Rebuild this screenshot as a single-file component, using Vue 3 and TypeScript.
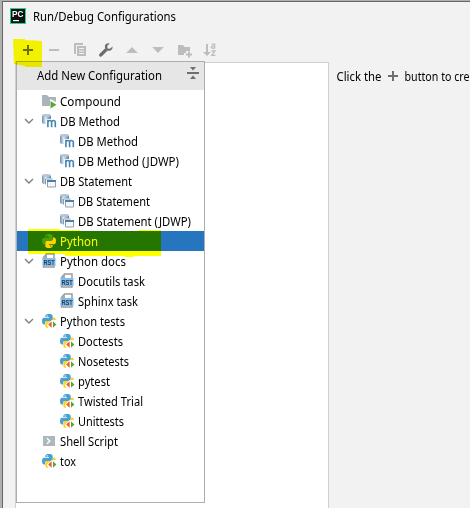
<script setup lang="ts">
interface TreeRow {
  label: string
  icon: string
  level?: number
  open?: boolean
  selected?: boolean
  width: number
}

const tools: string[] = ['plus', 'minus', 'copy', 'wrench', 'up', 'down', 'folder', 'sort']

const rows: TreeRow[] = [
  { label: 'Compound', icon: 'compound', width: 61 },
  { label: 'DB Method', icon: 'method', open: true, width: 60 },
  { label: 'DB Method', icon: 'method', level: 1, width: 60 },
  { label: 'DB Method (JDWP)', icon: 'method', level: 1, width: 101 },
  { label: 'DB Statement', icon: 'statement', open: true, width: 72 },
  { label: 'DB Statement', icon: 'statement', level: 1, width: 72 },
  { label: 'DB Statement (JDWP)', icon: 'statement', level: 1, width: 113 },
  { label: 'Python', icon: 'python', selected: true, width: 38 },
  { label: 'Python docs', icon: 'rst', open: true, width: 66 },
  { label: 'Docutils task', icon: 'rst', level: 1, width: 67 },
  { label: 'Sphinx task', icon: 'rst', level: 1, width: 60 },
  { label: 'Python tests', icon: 'pytest', open: true, width: 65 },
  { label: 'Doctests', icon: 'pytest', level: 1, width: 45 },
  { label: 'Nosetests', icon: 'pytest', level: 1, width: 51 },
  { label: 'pytest', icon: 'pytest', level: 1, width: 32 },
  { label: 'Twisted Trial', icon: 'pytest', level: 1, width: 65 },
  { label: 'Unittests', icon: 'pytest', level: 1, width: 46 },
  { label: 'Shell Script', icon: 'shell', width: 58 },
  { label: 'tox', icon: 'pytest', width: 16 },
]
</script>

<template>
  <svg class="defs" width="0" height="0">
    <symbol id="plus" viewBox="0 0 16 16"><path d="M7 3h2v4h4v2H9v4H7V9H3V7h4z" fill="#6e6e6e" /></symbol>
    <symbol id="minus" viewBox="0 0 16 16"><path d="M3 7h10v2H3z" fill="#bdbdbd" /></symbol>
    <symbol id="copy" viewBox="0 0 16 16">
      <path d="M2 1h9v2H4v9H2z" fill="#bdbdbd" />
      <path d="M5 4h9v10H5z" fill="#bdbdbd" />
      <path d="M7 6.5h5M7 9h5M7 11.5h5" stroke="#f2f2f2" />
    </symbol>
    <symbol id="wrench" viewBox="0 0 16 16">
      <path d="M14.5 4.4 12 6.8 9.6 6.5 9.2 4 11.6 1.5C9.2.9 7 2.3 6.9 4.5c0 .7.1 1.2.4 1.7L1.6 11.7c-.8.8-.7 1.8 0 2.5.7.7 1.8.7 2.5-.1l5.5-5.6c2.9.9 5.4-1.2 4.9-4.1z" fill="#6e6e6e" />
    </symbol>
    <symbol id="up" viewBox="0 0 16 16"><path d="M2.2 11 8 5l5.8 6z" fill="#bdbdbd" /></symbol>
    <symbol id="down" viewBox="0 0 16 16"><path d="M2.2 5 8 11l5.8-6z" fill="#bdbdbd" /></symbol>
    <symbol id="folder" viewBox="0 0 16 16">
      <path d="M2 3h5l1.5 2H14v4h-4v2H8v2H2z" fill="#bdbdbd" />
      <path d="M12 9.5h2v2h2v2h-2v2h-2v-2h-2v-2h2z" fill="#bdbdbd" />
    </symbol>
    <symbol id="sort" viewBox="0 0 16 16">
      <path d="M4 2h2v8h3l-4 4-4-4h3z" fill="#bdbdbd" />
      <path d="M9.6 2.2h3v4h-2.3c-1.2 0-1.2-2 0-2h2.3M9.5 9h3.4L9.9 13.3h3.5" fill="none" stroke="#bdbdbd" stroke-width="1.3" />
    </symbol>
    <symbol id="compound" viewBox="0 0 16 16">
      <path d="M1 2h5l2 2h7v5L9 6v7H1z" fill="#aab5bb" />
      <path d="M9.5 8 15.5 11.7l-6 3.7z" fill="#59a832" />
    </symbol>
    <linearGradient id="steel" x1="0" x2="1">
      <stop offset="0" stop-color="#7090b0" /><stop offset=".4" stop-color="#dce7f1" /><stop offset="1" stop-color="#527ba3" />
    </linearGradient>
    <symbol id="cylinder" viewBox="0 0 16 16">
      <path d="M1 2.5v7.3C1.5 11 3.5 11.3 5 11V7h5V2.5z" fill="url(#steel)" />
      <ellipse cx="5.5" cy="2.4" rx="4.5" ry="1.4" fill="#b5c5d6" />
    </symbol>
    <symbol id="method" viewBox="0 0 16 16">
      <use href="#cylinder" />
      <path d="M5.2 6h9.8v9H5.2z" fill="#fff" />
      <path d="M6.9 14.3V6.8M7 9c.3-2.1 3.6-2.1 3.6.1v5.2M10.7 9c.3-2.1 3.6-2.1 3.6.1v5.2" fill="none" stroke="#4284ae" stroke-width="1.6" />
    </symbol>
    <symbol id="statement" viewBox="0 0 16 16">
      <use href="#cylinder" />
      <path d="M4 5h8v2.5H6V12H4z" fill="#fff" />
      <path d="M4.5 6h7M4.5 6v5.5" stroke="#7f9bb5" fill="none" />
      <path d="M6.5 7.5h8v6.5h-8z" fill="#f4f6f8" stroke="#91a0ae" />
      <path d="M6 7h9v2H6z" fill="#4f7fa8" />
    </symbol>
    <symbol id="snake-top" viewBox="0 0 14 14">
      <path d="M3.3 3V2.1C3.3.6 4.8 0 7 0s3.7.6 3.7 2.1v3c0 1.3-.8 1.9-2 1.9H5.2C3.9 7 3 7.9 3 9.2v1.2H2C.6 10.4 0 9 0 7s.6-3.3 2-3.3h5V3zM5.2 1.2a.7.7 0 1 0 0 1.4.7.7 0 0 0 0-1.4" fill-rule="evenodd" />
    </symbol>
    <symbol id="python" viewBox="0 0 16 16">
      <use href="#snake-top" x="1" y="1" width="14" height="14" fill="#4b9fd3" />
      <g transform="rotate(180 8 8)"><use href="#snake-top" x="1" y="1" width="14" height="14" fill="#ffd21e" /></g>
    </symbol>
    <symbol id="pytest" viewBox="0 0 16 16">
      <use href="#python" />
      <path d="M10.5 7.2 16 7v9H7.5l-1.6-4.5z" fill="#fff" />
      <path d="M10.6 8.2v6.6L7.2 11.5z" fill="#f05a28" />
      <path d="M12 8.2v6.6l3.4-3.3z" fill="#59a832" />
    </symbol>
    <symbol id="rst" viewBox="0 0 16 16">
      <path d="M2.5 6V4.5l3-3.5H13v5M2.5 12v2H13v-2" fill="#fff" stroke="#9c9c9c" stroke-width="1.5" />
      <path d="M2 5 6 .7V5z" fill="#a4a8aa" />
      <path d="M1.5 5h13v8h-13z" fill="#82bced" />
      <text x="2.4" y="11.5" textLength="11.4" lengthAdjust="spacingAndGlyphs" class="rst-text">RST</text>
    </symbol>
    <symbol id="shell" viewBox="0 0 16 16">
      <path d="M2 3h12v10H2z" fill="#acb8bf" />
      <path d="m6 5.2 2.8 2.8L6 10.8" fill="none" stroke="#fff" stroke-width="1.4" />
    </symbol>
  </svg>

  <main class="window">
    <header class="titlebar">
      <svg class="app-icon" viewBox="0 0 16 16">
        <path d="M0 0h16v16H0z" fill="#20d58a" /><path d="M1 1h14v14H1z" fill="#111" />
        <text x="2" y="9" textLength="11.5" lengthAdjust="spacingAndGlyphs" class="logo-text">PC</text>
        <path d="M3 12h6v1.2H3z" fill="#fff" />
      </svg>
      <svg class="title" width="150" height="20"><text x="0" y="14" textLength="143" lengthAdjust="spacingAndGlyphs">Run/Debug Configurations</text></svg>
    </header>
    <nav class="toolbar">
      <svg v-for="tool in tools" :key="tool" class="icon"><use :href="'#' + tool" /></svg>
    </nav>
    <div class="body">
      <section class="list"></section>
      <p class="hint">
        <svg width="46" height="20"><text x="0.5" y="14" textLength="45" lengthAdjust="spacingAndGlyphs">Click the</text></svg>
        <svg class="icon hint-plus"><use href="#plus" /></svg>
        <svg width="66" height="20"><text x="0.5" y="14" textLength="65" lengthAdjust="spacingAndGlyphs">button to cre</text></svg>
      </p>
    </div>

    <aside class="popup">
      <div class="popup-head">
        <svg width="128" height="20"><text x="0" y="14" textLength="125" lengthAdjust="spacingAndGlyphs">Add New Configuration</text></svg>
        <svg class="collapse" viewBox="0 0 14 14"><path d="M1 6h12v2H1zM4 1h6L7 4.5zM4 13h6L7 9.5z" fill="#6e6e6e" /></svg>
      </div>
      <ul class="tree">
        <li v-for="(row, i) in rows" :key="i" class="row" :class="{ child: row.level, selected: row.selected }">
          <span class="arrow"><svg v-if="row.open" viewBox="0 0 10 8"><path d="m1 2 4 4 4-4" /></svg></span>
          <svg class="icon"><use :href="'#' + row.icon" /></svg>
          <svg class="label" width="120" height="20"><text x="0" y="15" :textLength="row.width" lengthAdjust="spacingAndGlyphs">{{ row.label }}</text></svg>
        </li>
      </ul>
    </aside>
    <svg class="marker" viewBox="0 0 470 508">
      <path d="M13 39h12v1l17 1v26H25v-1l-11-2z" />
      <path d="M28 229h32v1h20v1h59v-1h22v26h-27v1h-9v-1H65v-2H28z" />
    </svg>
  </main>
</template>

<style>
body { overflow: hidden; }
</style>
<style scoped>
.defs { position: absolute; }
.window {
  position: relative;
  box-sizing: border-box;
  width: 470px;
  height: 508px;
  display: flex;
  flex-direction: column;
  padding: 2px 0 0 3px;
  background: #f2f2f2;
  box-shadow: inset 0 1px #b0b0b0, inset 2px 0 #b0b0b0, inset 0 2px #686868, inset 3px 0 #686868;
  font: 12px "Noto Sans", sans-serif;
  overflow: hidden;
}
svg { display: block; flex: none; }
text { fill: #000; }
.titlebar { height: 37px; display: flex; padding: 6px 0 0 7px; box-sizing: border-box; }
.app-icon { width: 16px; height: 16px; }
.title { margin: -1px 0 0 7px; }
.logo-text { fill: #fff; font: bold 9px "Liberation Sans", sans-serif; }
.rst-text { fill: #263d50; font: bold 6.5px "Liberation Sans", sans-serif; }
.toolbar { display: flex; gap: 10px; height: 23px; padding: 3px 0 0 17px; box-sizing: border-box; }
.icon { width: 16px; height: 16px; }
.body { flex: 1; display: flex; padding-left: 12px; }
.list { flex: none; width: 314px; box-sizing: border-box; background: #fff; border: 1px solid #d0d0d0; border-bottom: 0; }
.hint { display: flex; margin: 5px 0 0 7px; }
.hint-plus { margin: 1px 3px 0; }
.popup {
  position: absolute;
  left: 16px;
  top: 61px;
  width: 189px;
  height: 442px;
  box-sizing: border-box;
  border: 1px solid #adadad;
  background: #fff;
}
.popup-head { height: 28px; display: flex; background: #e6e6e6; padding: 4px 0 0 20px; box-sizing: border-box; }
.collapse { width: 14px; height: 14px; margin: 0 0 0 21px; }
.tree { margin: 0; padding: 1px 0 0; list-style: none; }
.row { height: 20px; display: flex; align-items: center; padding-left: 6px; }
.arrow { width: 18px; flex: none; }
.child .arrow { width: 36px; }
.arrow svg { width: 10px; height: 8px; margin-left: 1px; }
.arrow path { fill: none; stroke: #7f7f7f; stroke-width: 1.4; }
.label { margin-left: 3px; }
.selected { background: #2675bf; }
.selected text { fill: #fff; }
.marker { position: absolute; left: 0; top: 0; width: 470px; height: 508px; mix-blend-mode: multiply; pointer-events: none; }
.marker path { fill: #ff0; }
</style>
